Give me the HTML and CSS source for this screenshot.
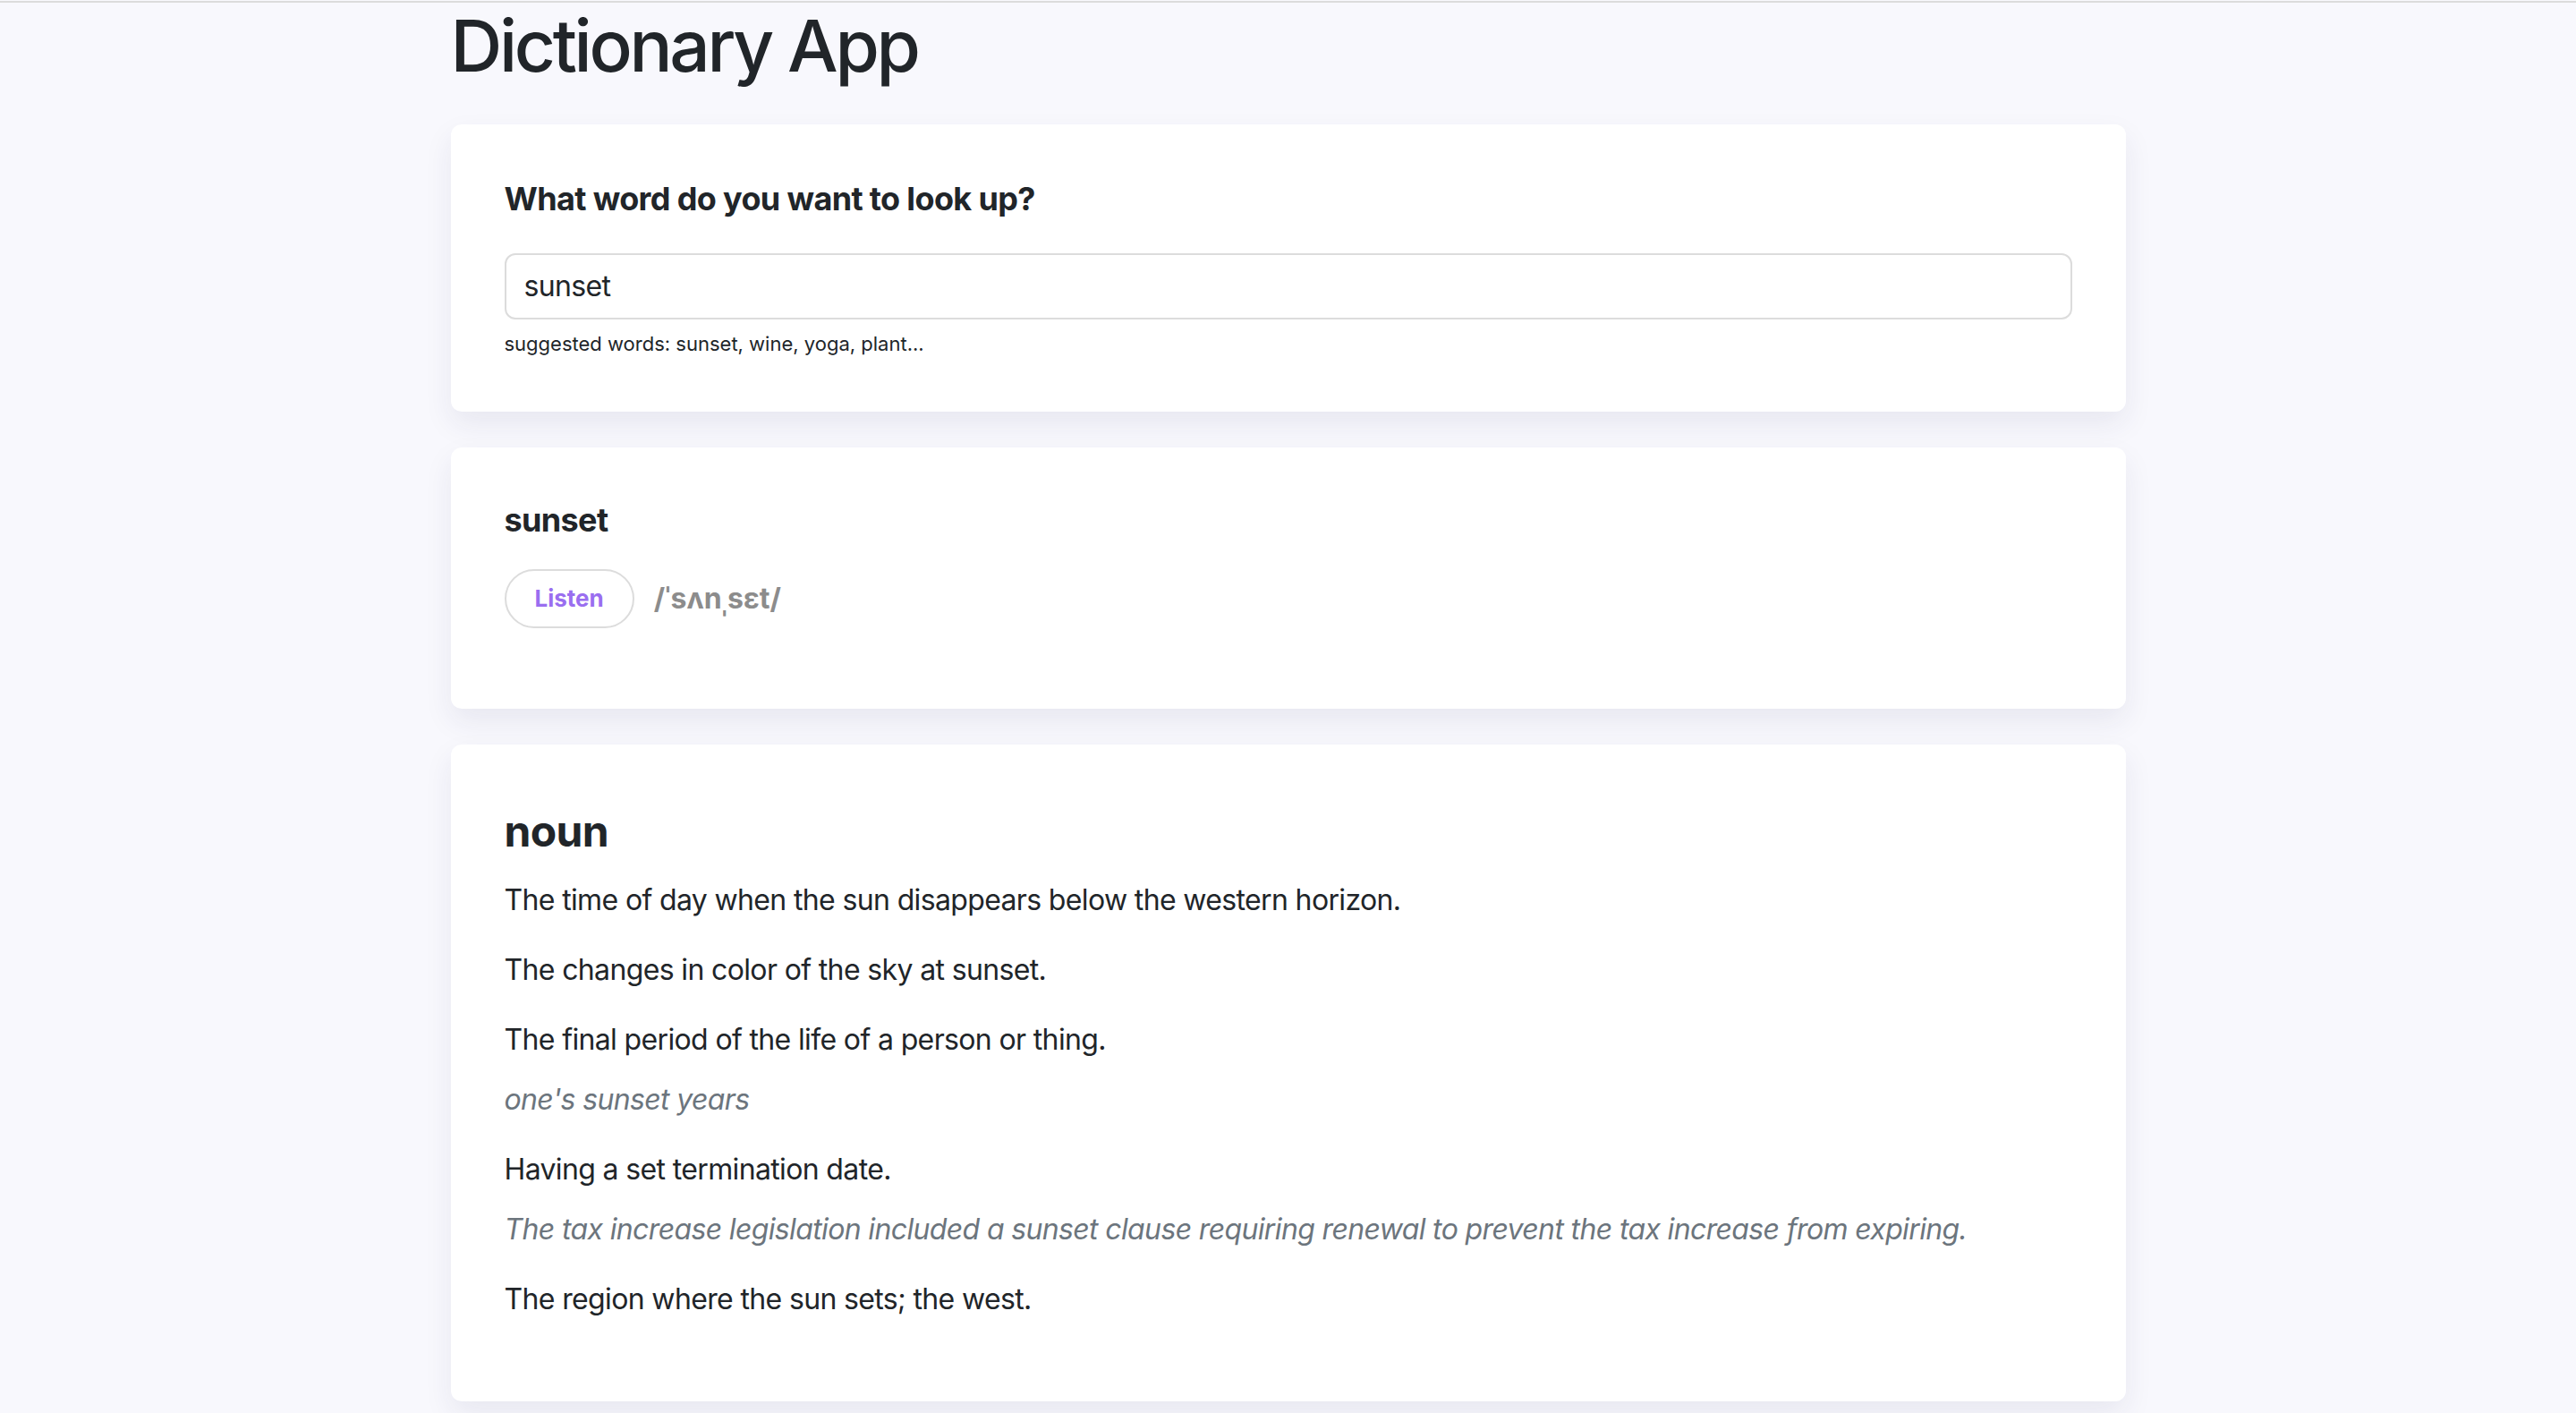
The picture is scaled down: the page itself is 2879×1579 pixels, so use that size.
FILE: index.html
```html
<!DOCTYPE html>
<html lang="en">
<head>
<meta charset="utf-8">
<title>Dictionary App</title>
<link rel="stylesheet" href="styles.css">
</head>
<body>
<div class="topline"></div>
<div class="container">
  <h1 class="app-title">Dictionary App</h1>

  <section class="card search-card">
    <h2 class="card-heading">What word do you want to look up?</h2>
    <input class="search-input" type="search" value="sunset">
    <div class="hint">suggested words: sunset, wine, yoga, plant...</div>
  </section>

  <section class="card word-card">
    <h2 class="word">sunset</h2>
    <div class="phonetic-row">
      <button class="listen-btn" type="button">Listen</button>
      <span class="phonetic">/ˈsʌnˌsɛt/</span>
    </div>
  </section>

  <section class="card meaning-card">
    <h3 class="part-of-speech">noun</h3>
    <div class="sense">
      <p class="definition">The time of day when the sun disappears below the western horizon.</p>
    </div>
    <div class="sense">
      <p class="definition">The changes in color of the sky at sunset.</p>
    </div>
    <div class="sense">
      <p class="definition">The final period of the life of a person or thing.</p>
      <p class="example">one's sunset years</p>
    </div>
    <div class="sense">
      <p class="definition">Having a set termination date.</p>
      <p class="example">The tax increase legislation included a sunset clause requiring renewal to prevent the tax increase from expiring.</p>
    </div>
    <div class="sense">
      <p class="definition">The region where the sun sets; the west.</p>
    </div>
  </section>
</div>
</body>
</html>
```

FILE: styles.css
```css
* { box-sizing: border-box; }

html, body {
  margin: 0;
  padding: 0;
}

body {
  background: #f8f8fd;
  color: #212529;
  font-family: "Inter", "Liberation Sans", sans-serif;
  font-size: 32px;
  line-height: 1.5;
  letter-spacing: -0.02em;
}

.topline {
  height: 3px;
  border-top: 1px solid #f8f8fd;
  background: #dcdcdc;
}

.container {
  width: 1872px;
  margin: 0 auto;
  padding-bottom: 14px;
}

.app-title {
  margin: 0 0 40px;
  font-size: 80px;
  font-weight: 500;
  line-height: 1.2;
  letter-spacing: -3.3px;
}

.card {
  background: #fff;
  border-radius: 12px;
  box-shadow: 0 14px 32px rgba(40, 40, 90, 0.08);
  padding: 60px;
  margin-bottom: 40px;
}

.card-heading {
  margin: 0 0 37px;
  font-size: 36px;
  font-weight: 700;
  line-height: 1.3;
}

.search-input {
  display: block;
  width: 100%;
  height: 74px;
  padding: 0 20px;
  font-family: inherit;
  font-size: 32px;
  letter-spacing: -0.02em;
  color: #212529;
  border: 2px solid #dcdcdc;
  border-radius: 12px;
  background: #fff;
  outline: none;
}

.hint {
  margin-top: 12px;
  font-size: 22px;
  line-height: 1.4;
  letter-spacing: 0;
}

.word {
  margin: 0 0 33px;
  font-size: 36px;
  font-weight: 700;
  line-height: 1.2;
}

.phonetic-row {
  display: flex;
  align-items: center;
  gap: 22px;
  margin-bottom: 30px;
}

.listen-btn {
  height: 66px;
  padding: 0 32px;
  border: 2px solid #dcdcdc;
  border-radius: 33px;
  background: #fff;
  color: #9a6ef0;
  font-family: inherit;
  font-size: 26px;
  font-weight: 700;
  letter-spacing: 0;
}

.phonetic {
  color: #8c8c8c;
  font-size: 32px;
  font-weight: 700;
  letter-spacing: 0;
}

.part-of-speech {
  margin: 8px 0 25px;
  font-size: 48px;
  font-weight: 700;
  line-height: 1.2;
}

.sense {
  margin-bottom: 30px;
}

.definition {
  margin: 0;
}

.example {
  margin: 19px 0 0;
  font-style: italic;
  color: #6c757d;
}
```
